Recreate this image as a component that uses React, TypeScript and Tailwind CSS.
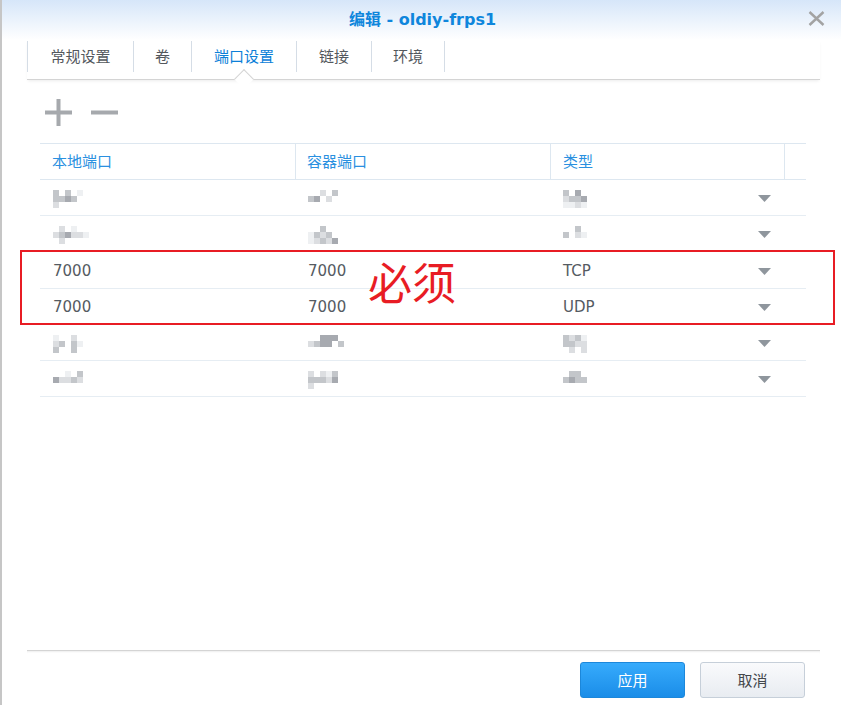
import React from "react";

const shade: Record<string, string> = {
    ".": "transparent",
    "1": "#eef0f2",
    "2": "#dcdee1",
    "3": "#c3c6ca",
    "4": "#a7aab0",
};

// pixelated (mosaic) placeholder for blurred values
const Blur = ({ p }: { p: string[] }) => (
    <div className="flex flex-col">
        {p.map((line, i) => (
            <div key={i} className="flex">
                {line.split("").map((c, j) => (
                    <div key={j} className="h-[6px] w-[6px]" style={{ background: shade[c] }} />
                ))}
            </div>
        ))}
    </div>
);

type Cell = string | string[];

interface Row {
    local: Cell;
    container: Cell;
    type: Cell;
    tall?: boolean;
}

const rows: Row[] = [
    { local: ["3.3.1.", "3343..", "2....."], container: ["..2.3", "34.2.", "....."], type: ["3.4.", "2334", "1121"] },
    { local: [".2.1..", "234221", ".2...."], container: ["..3..", "1323.", "12324"], type: ["..3.", "3.21", "...."] },
    { local: "7000", container: "7000", type: "TCP", tall: true },
    { local: "7000", container: "7000", type: "UDP" },
    { local: ["1..2..", "23.31.", "3..3.."], container: ["..444.", "2344.3", "......"], type: ["3231.", "3322.", ".2.2."] },
    { local: ["..1.3.", "42232.", "......"], container: ["2.213", "33324", "2...."], type: [".33.", "3433", "...."] },
];

const CellView = ({ v }: { v: Cell }) =>
    typeof v === "string" ? (
        <span className="font-['DejaVu_Sans',sans-serif] text-[15px] text-[#555b62]">{v}</span>
    ) : (
        <Blur p={v} />
    );

const Arrow = () => (
    <svg width="13" height="7" viewBox="0 0 13 7">
        <path d="M0 0 H13 L6.5 7 Z" fill="#8f969d" />
    </svg>
);

const tabs = [
    { label: "常规设置", w: "w-[106px]" },
    { label: "卷", w: "w-[58px]" },
    { label: "端口设置", w: "w-[105px]", active: true },
    { label: "链接", w: "w-[75px]" },
    { label: "环境", w: "w-[74px]" },
];

export default function App() {
    return (
        <div className="relative flex h-[705px] w-[841px] flex-col overflow-hidden border-l-2 border-[#c6c6c6] bg-white font-['Noto_Sans_CJK_SC',sans-serif]">
            {/* active window indicator on the left edge */}
            <div className="absolute left-[-2px] top-[81px] h-[65px] w-[2px] bg-[#1677cc]" />

            {/* title bar */}
            <div className="relative flex h-[40px] shrink-0 items-center justify-center bg-gradient-to-b from-[#d6e6f9] to-white">
                <span className="ml-[2px] font-['DejaVu_Sans','Noto_Sans_CJK_SC',sans-serif] text-[16px] font-bold text-[#0f86dc]">
                    编辑 - oldiy-frps1
                </span>
                <button className="absolute right-[16px] top-[11px]">
                    <svg width="17" height="15" viewBox="0 0 17 15">
                        <path d="M1.5 1 L15.5 14 M15.5 1 L1.5 14" stroke="#a3a3a3" strokeWidth="2.4" />
                    </svg>
                </button>
            </div>

            {/* tabs */}
            <div className="relative ml-[25px] mr-[21px] flex h-[40px] shrink-0 border-b border-[#d4d4d4] pt-[1px] shadow-[0_2px_3px_-1px_rgba(0,0,0,0.08)]">
                {tabs.map((t, i) => (
                    <div
                        key={t.label}
                        className={`flex h-[31px] items-center justify-center border-l border-[#d5dde6] text-[15px] ${t.w} ${i === tabs.length - 1 ? "border-r" : ""} ${t.active ? "text-[#0c80d8]" : "text-[#53585d]"}`}
                    >
                        {t.label}
                    </div>
                ))}
                <div className="absolute left-[210px] top-[32px] h-[14px] w-[14px] rotate-45 border-l border-t border-[#d4d4d4] bg-white" />
            </div>

            {/* toolbar */}
            <div className="flex h-[63px] shrink-0 items-center gap-[19px] pl-[43px] pt-[1px]">
                <svg width="27" height="27" viewBox="0 0 27 27">
                    <rect x="0" y="11.5" width="27" height="4" fill="#a6a9ad" />
                    <rect x="11.5" y="0" width="4" height="27" fill="#a6a9ad" />
                </svg>
                <svg width="27" height="27" viewBox="0 0 27 27">
                    <rect x="0" y="11.5" width="27" height="4" fill="#a6a9ad" />
                </svg>
            </div>

            {/* table */}
            <div className="ml-[38px] w-[766px] flex-1">
                <div className="grid h-[37px] grid-cols-[256px_255px_234px_21px] border-y border-[#dde7f0] text-[15px] text-[#2a90e0]">
                    <div className="flex items-center border-r border-[#dde7f0] pl-[12px]">本地端口</div>
                    <div className="flex items-center border-r border-[#dde7f0] pl-[11px]">容器端口</div>
                    <div className="flex items-center border-r border-[#dde7f0] pl-[12px]">类型</div>
                    <div />
                </div>
                {rows.map((r, i) => (
                    <div
                        key={i}
                        className={`grid grid-cols-[256px_255px_234px_21px] border-b border-[#e6edf3] ${r.tall ? "h-[37px]" : "h-[36px]"}`}
                    >
                        <div className="flex items-center pl-[13px] pt-[2px]">
                            <CellView v={r.local} />
                        </div>
                        <div className="flex items-center pl-[12px] pt-[2px]">
                            <CellView v={r.container} />
                        </div>
                        <div className="flex items-center justify-between pl-[12px] pr-[14px] pt-[2px]">
                            <CellView v={r.type} />
                            <Arrow />
                        </div>
                        <div />
                    </div>
                ))}
            </div>

            {/* annotation */}
            <div className="absolute left-[18px] top-[250px] h-[75px] w-[815px] border-2 border-[#e81c24]" />
            <div className="absolute left-[366px] top-[259px] text-[44px] leading-none text-[#e81c24]">必须</div>

            {/* footer */}
            <div className="ml-[25px] mr-[21px] flex h-[55px] shrink-0 items-start justify-end gap-[15px] border-t border-[#d4d4d4] pr-[15px] pt-[11px] shadow-[inset_0_2px_2px_-1px_rgba(0,0,0,0.07)]">
                <button className="flex h-[36px] w-[105px] items-center justify-center rounded-[3px] border border-[#1c87da] bg-gradient-to-b from-[#36abfc] to-[#1a8de8] text-[15px] text-white">
                    应用
                </button>
                <button className="flex h-[36px] w-[105px] items-center justify-center rounded-[3px] border border-[#c6cfd9] bg-gradient-to-b from-[#f9fafc] to-[#e8ecf1] text-[15px] text-[#43474b]">
                    取消
                </button>
            </div>
        </div>
    );
}
